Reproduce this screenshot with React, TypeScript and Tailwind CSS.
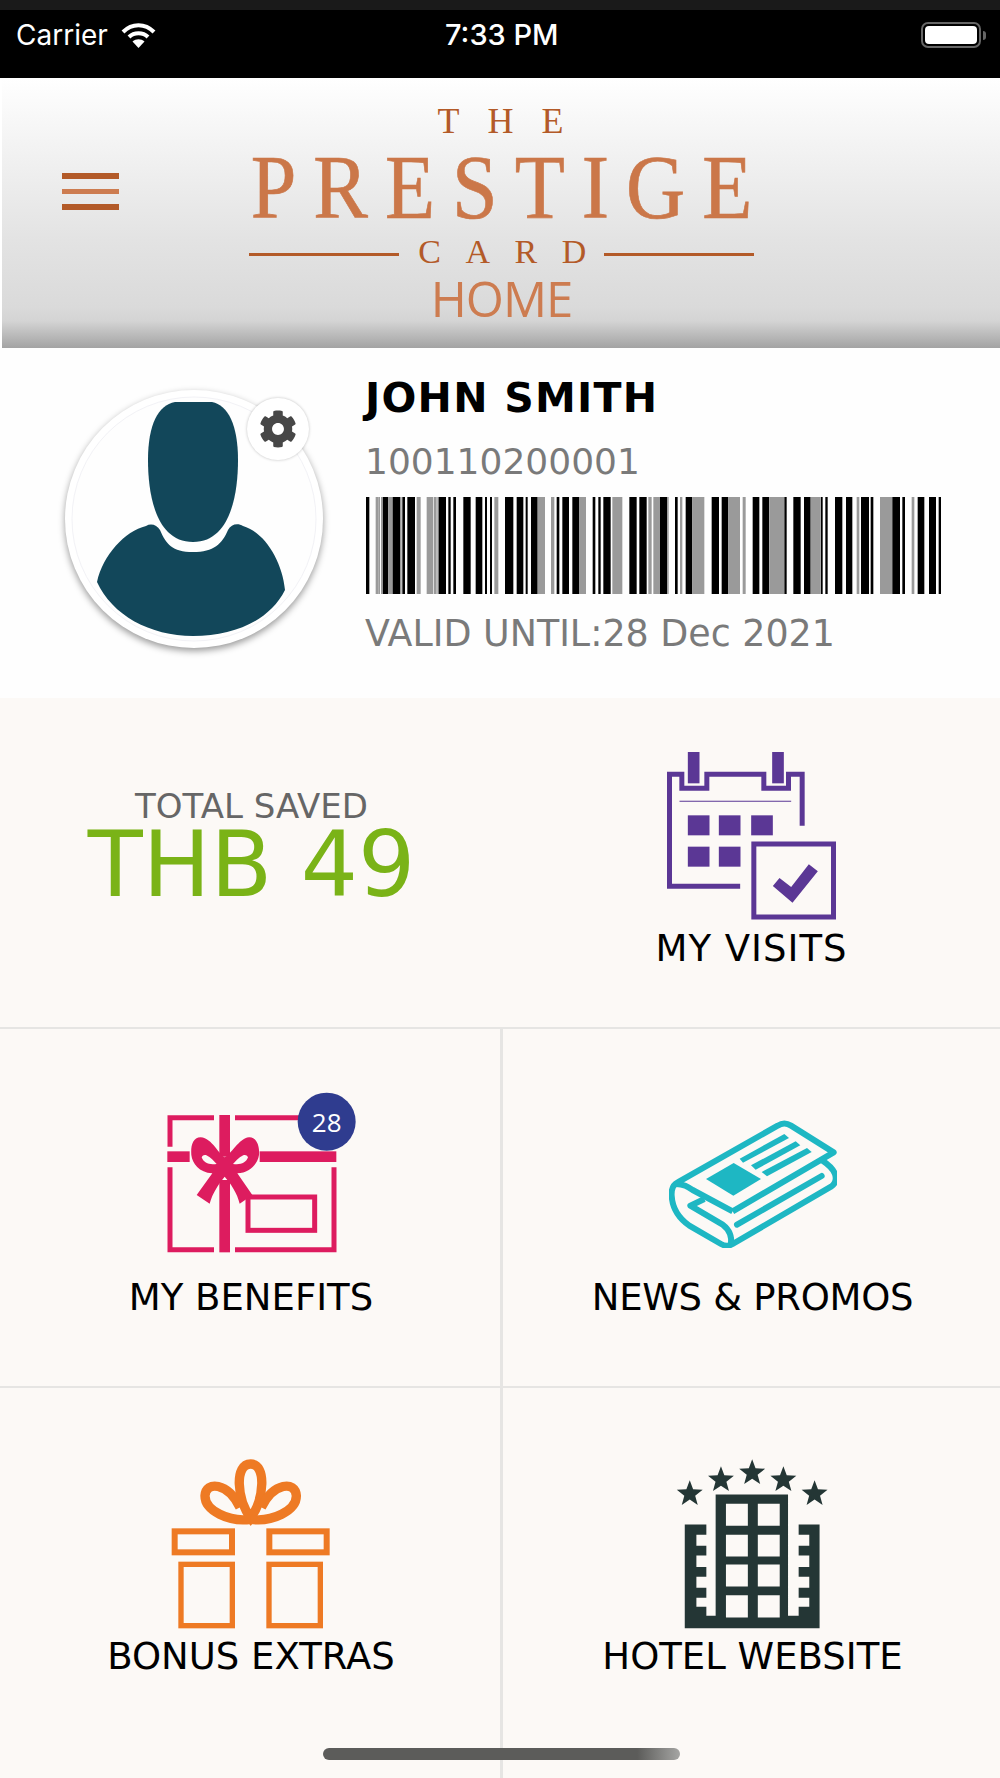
import React from "react";
import { FaCog } from "react-icons/fa";

const BARS: [number, number, number][] = [
  [18,28,0],[47,55,1],[55,60,1],[63,67,1],[68,85,0],[85,98,1],[98,120,0],[120,125,1],[127,135,0],[142,165,0],[170,182,1],
  [200,220,1],[222,230,1],[232,236,1],[236,258,0],[265,272,0],[280,288,0],
  [310,332,0],[347,367,0],[375,381,0],[390,396,0],[403,415,1],
  [435,460,0],[470,490,0],[497,503,0],[513,533,0],[533,555,1],
  [573,583,1],[590,598,0],[607,627,0],[637,657,0],[657,678,1],
  [698,706,0],[715,722,0],[730,752,0],[757,787,1],
  [808,830,0],[838,860,0],[865,875,1],[880,900,1],[900,922,0],[922,926,1],
  [945,953,0],[960,967,1],[977,997,0],[997,1033,1],
  [1055,1077,0],[1085,1105,0],[1105,1140,1],[1148,1157,1],
  [1178,1198,0],[1207,1228,0],[1230,1260,1],[1260,1272,1],[1273,1280,0],
  [1300,1322,0],[1332,1352,0],[1352,1380,1],[1382,1388,0],[1396,1403,0],
  [1425,1447,0],[1458,1477,0],[1490,1498,1],[1503,1527,0],[1532,1540,0],
  [1560,1597,1],[1597,1620,0],[1627,1635,0],
  [1655,1663,1],[1673,1693,0],[1707,1728,0],[1736,1743,0],
];

function starPoints(cx: number, cy: number, r: number) {
  const pts: string[] = [];
  for (let i = 0; i < 10; i++) {
    const rad = i % 2 === 0 ? r : r * 0.42;
    const a = -Math.PI / 2 + (i * Math.PI) / 5;
    pts.push(`${cx + rad * Math.cos(a)},${cy + rad * Math.sin(a)}`);
  }
  return pts.join(" ");
}

function Calendar() {
  return (
    <svg width="171" height="170" viewBox="140 60 512 510">
      <path d="M548 284V130H507V172H433V130H262V172H187V130H150V466H362" fill="none" stroke="#5b3795" strokeWidth="15" />
      <g fill="#5b3795">
        <rect x="205" y="63" width="35" height="94" />
        <rect x="458" y="63" width="35" height="94" />
        <rect x="180" y="209" width="335" height="4" opacity="0.75" />
        <rect x="205" y="253" width="65" height="60" />
        <rect x="298" y="253" width="65" height="60" />
        <rect x="395" y="253" width="65" height="60" />
        <rect x="205" y="347" width="65" height="60" />
        <rect x="298" y="347" width="65" height="60" />
        <polygon points="460,465 480,441 515,468 568,400 595,421 519,515" />
      </g>
      <rect x="403" y="339" width="239" height="219" fill="none" stroke="#5b3795" strokeWidth="15" />
    </svg>
  );
}

function Gift() {
  return (
    <svg width="214" height="162" viewBox="70 30 642 486" className="overflow-visible">
      <g fill="none" stroke="#dd1c5f" strokeWidth="15">
        <path d="M88 200V113H220M283 113H480M580 262V509H283M220 509H88V262" />
        <rect x="322" y="351" width="200" height="100" />
      </g>
      <g fill="#dd1c5f">
        <rect x="80" y="214" width="67" height="32" />
        <rect x="357" y="214" width="230" height="32" />
        <rect x="236" y="105" width="32" height="125" />
        <rect x="236" y="300" width="32" height="217" />
        <path
          fillRule="evenodd"
          d="M252 232C235 225 215 175 180 172C155 172 150 200 152 225C155 250 175 278 215 280L168 345L207 371C215 340 235 310 252 290C270 310 290 340 297 371L335 345L290 280C325 278 350 255 355 225C358 195 345 170 325 172C295 175 270 225 252 232ZM183 232C190 220 200 222 228 252C205 255 190 250 183 232ZM322 232C315 220 305 222 277 252C300 255 315 250 322 232Z"
        />
      </g>
      <circle cx="558" cy="125" r="87" fill="#2f3c8f" />
      <text x="558" y="155" textAnchor="middle" fill="#ffffff" fontSize="78" fontFamily="'Open Sans', sans-serif">28</text>
    </svg>
  );
}

function News() {
  return (
    <svg width="168" height="128" viewBox="84 58 504 384">
      <g fill="none" stroke="#1eb7c3" strokeWidth="18" strokeLinejoin="round">
        <path d="M275 332L578 155L450 75Q430 62 410 75L110 245Q90 255 92 285Q95 340 145 375L240 430Q258 440 275 430L570 258Q590 245 582 220Q575 200 545 180" />
        <path d="M105 250C128 250 140 258 155 268L275 332" />
        <path d="M190 295L148 315L245 372Q275 395 270 432" />
      </g>
      <g fill="#1eb7c3">
        <polygon points="195,235 278,187 360,235 277,285" />
        <polygon points="296,174 430,100 444,112 306,186" />
        <polygon points="330,194 464,122 478,134 344,207" />
        <polygon points="362,214 498,142 512,154 378,227" />
      </g>
      <path d="M288 372L542 226" stroke="#1eb7c3" strokeWidth="18" strokeLinecap="round" />
    </svg>
  );
}

function BonusGift() {
  return (
    <svg width="160" height="170" viewBox="65 55 480 510">
      <g fill="none" stroke="#ee7a24">
        <g strokeWidth="28">
          <path d="M304 232C262 175 255 70 304 70C352 70 345 175 304 232Z" />
          <path d="M304 236C240 245 166 210 167 165C170 120 235 125 272 200" />
          <path d="M304 236C368 245 442 210 441 165C438 120 373 125 336 200" />
        </g>
        <g strokeWidth="18">
          <rect x="76" y="272" width="172" height="63" />
          <rect x="360" y="272" width="172" height="63" />
        </g>
        <g strokeWidth="16">
          <rect x="95" y="371" width="154" height="184" />
          <rect x="359" y="371" width="154" height="184" />
        </g>
      </g>
    </svg>
  );
}

function Hotel() {
  const windows: string[] = [];
  for (const y of [190, 283, 373, 465]) {
    for (const x of [199, 295]) {
      windows.push(`M${x} ${y}h66v${y === 465 ? 67 : 66}h-66Z`);
    }
  }
  return (
    <svg width="153" height="170" viewBox="50 55 458 512">
      <g fill="#243635">
        <path
          fillRule="evenodd"
          d={`M75 252H140V283H110V316H140V346H110V380H140V410H110V443H140V473H110V500H140V527H168V162H386V527H418V500H450V473H418V443H450V410H418V380H450V346H418V316H450V283H418V252H481V565H75Z${windows.join("")}`}
        />
        {[[90, 160], [184, 118], [278, 97], [372, 118], [466, 160]].map(([x, y]) => (
          <polygon key={x} points={starPoints(x, y, 41)} />
        ))}
      </g>
    </svg>
  );
}

function Avatar() {
  return (
    <div className="relative h-[258px] w-[258px] rounded-full bg-white shadow-[0_3px_7px_rgba(0,0,0,0.4)]">
      <svg width="258" height="258" viewBox="65 390 258 258" className="block">
        <circle cx="194" cy="519" r="122" fill="#fefefe" stroke="#f2f2f6" strokeWidth="1" />
        <g fill="#12475a">
          <path d="M175 402H212C228 405 238 425 238 460C238 495 230 542 193 542C156 542 148 495 148 460C148 425 158 405 175 402Z" />
          <path d="M146 526C151 523 157 525 160 530C166 544 172 552 193 552C214 552 222 544 228 530C231 524 238 523 243 526C264 532 282 560 285 590C270 620 235 636 193 636C150 636 112 615 97 582C103 555 125 531 146 526Z" />
        </g>
      </svg>
      <div className="absolute left-[182px] top-[8px] flex h-[62px] w-[62px] items-center justify-center rounded-full bg-white shadow-[0_0_3px_rgba(0,0,0,0.25)]">
        <FaCog className="text-[38px] text-[#474747]" />
      </div>
    </div>
  );
}

function Cell({ icon, label, top, className, labelClass }: { icon: React.ReactNode; label: string; top: string; className: string; labelClass?: string }) {
  return (
    <div className={`flex flex-col items-center ${className}`}>
      <div className={`flex items-end justify-center ${top}`}>{icon}</div>
      <div className={`text-[37px] leading-[40px] text-black ${labelClass ?? ""}`}>{label}</div>
    </div>
  );
}

export default function App() {
  return (
    <div className="relative h-[1778px] w-[1000px] overflow-hidden bg-[#fcf9f6] font-['DejaVu_Sans',sans-serif]">
      {/* status bar */}
      <div className="flex h-[78px] flex-col bg-black">
        <div className="h-[10px] bg-[#1a1a1a]" />
        <div className="relative flex h-[50px] items-center justify-between pl-[16px] pr-[14px] font-['Inter',sans-serif] text-[28px] text-white">
          <div className="flex items-center gap-[13px]">
            <span>Carrier</span>
            <svg width="35" height="25" viewBox="0 0 35 25" fill="none" stroke="#fff" strokeWidth="4" strokeLinecap="butt">
              <path d="M2 9C11 0 24 0 33 9" />
              <path d="M8 14C13 9 22 9 27 14" />
              <path d="M17.5 25L11.5 18.5C15 15.5 20 15.5 23.5 18.5Z" fill="#fff" stroke="none" />
            </svg>
          </div>
          <span className="absolute left-[445px] text-[29px] font-medium">7:33 PM</span>
          <div className="flex items-center gap-[2px]">
            <div className="h-[26px] w-[60px] rounded-[7px] border-2 border-[#666] p-[2px]">
              <div className="h-full w-full rounded-[4px] bg-white" />
            </div>
            <div className="h-[9px] w-[3px] rounded-r-full bg-[#666]" />
          </div>
        </div>
      </div>

      {/* header */}
      <div className="flex h-[270px] border-l-2 border-white bg-[linear-gradient(180deg,#ffffff_0%,#f3f3f3_25%,#e3e3e3_60%,#dadada_85%,#d4d4d4_90%,#a3a3a3_100%)] pl-[60px]">
        <div className="mt-[95px] flex h-[37px] w-[57px] flex-col justify-between">
          <div className="h-[6px] bg-[#b35a28]" />
          <div className="h-[5px] bg-[#cd7c50]" />
          <div className="h-[6px] bg-[#b35a28]" />
        </div>
        <div className="ml-[130px] flex w-[505px] flex-col items-center font-['Liberation_Serif',serif]">
          <div className="mt-[28px] h-[30px] pl-[26px] text-[36px] leading-[30px] tracking-[28px] text-[#b35a28]">THE</div>
          <div className="mt-[16px] h-[72px] origin-center scale-y-[1.12] pl-[17px] text-[82px] leading-[72px] tracking-[17px] text-[#cb7749] [-webkit-text-stroke:0.6px_#cb7749]">PRESTIGE</div>
          <div className="mt-[14px] flex h-[32px] w-full items-center justify-between">
            <div className="h-[3px] w-[150px] shrink-0 bg-[#b35a28]" />
            <div className="-ml-[4px] -mr-[8px] mb-[4px] whitespace-nowrap pl-[22px] text-[34px] leading-[32px] tracking-[24.5px] text-[#b35a28]">CARD</div>
            <div className="h-[3px] w-[150px] shrink-0 bg-[#b35a28]" />
          </div>
          <div className="mt-[5px] font-['Open_Sans',sans-serif] text-[49px] font-normal leading-[46px] tracking-[-1px] text-[#cd7c50]">HOME</div>
        </div>
      </div>

      {/* profile */}
      <div className="flex h-[350px] bg-[#fefefe] pl-[65px]">
        <div className="mt-[42px]">
          <Avatar />
        </div>
        <div className="ml-[42px] flex w-[620px] flex-col">
          <div className="mt-[27px] text-[41px] font-bold leading-[46px] tracking-[1.25px] text-black">JOHN SMITH</div>
          <div className="mt-[21px] text-[36px] leading-[40px] text-[#7a7a7a]">100110200001</div>
          <div className="mt-[15px]">
            <svg width="583" height="97" viewBox="0 0 1749 97" preserveAspectRatio="none" className="-ml-[5px] block blur-[0.4px]">
              {BARS.map(([a, b, g]) => (
                <rect key={a} x={a} y="0" width={b - a} height="97" fill={g ? "#9a9a9a" : "#000000"} />
              ))}
            </svg>
          </div>
          <div className="mt-[20px] text-[36.4px] leading-[40px] text-[#7a7a7a]">VALID UNTIL:28 Dec 2021</div>
        </div>
      </div>

      {/* grid */}
      <div className="grid grid-cols-[503px_497px]">
        <div className="flex h-[329px] flex-col items-center pt-[88px]">
          <div className="text-[34px] leading-[40px] text-[#666666]">TOTAL SAVED</div>
          <div className="-mt-[6px] text-[90px] leading-[90px] text-[#7ab317]">THB 49</div>
        </div>
        <Cell icon={<Calendar />} label="MY VISITS" top="pt-[53px] pb-[8px]" className="h-[329px]" labelClass="tracking-[1px]" />
        <Cell
          icon={<Gift />}
          label="MY BENEFITS"
          top="pt-[61px] pb-[26px] pl-[39px]"
          className="h-[359px] border-t-2 border-r-[3px] border-[#e6e5e3] pl-[2px]"
        />
        <Cell icon={<News />} label="NEWS & PROMOS" top="pt-[91px] pb-[30px]" className="h-[359px] border-t-2 border-[#e6e5e3] pl-[2px]" labelClass="tracking-[-0.3px]" />
        <Cell
          icon={<BonusGift />}
          label="BONUS EXTRAS"
          top="pt-[71px] pb-[8px]"
          className="h-[393px] border-t-2 border-r-[3px] border-[#e6e5e3] pl-[2px]"
        />
        <Cell icon={<Hotel />} label="HOTEL WEBSITE" top="pt-[71px] pb-[8px]" className="h-[393px] border-t-2 border-[#e6e5e3] pl-[2px]" />
      </div>

      {/* home indicator */}
      <div className="absolute left-[323px] top-[1748px] h-[12px] w-[357px] rounded-full bg-[linear-gradient(90deg,#5c5c5a_0%,#5c5c5a_88%,#a5a5a3_100%)]" />
    </div>
  );
}
